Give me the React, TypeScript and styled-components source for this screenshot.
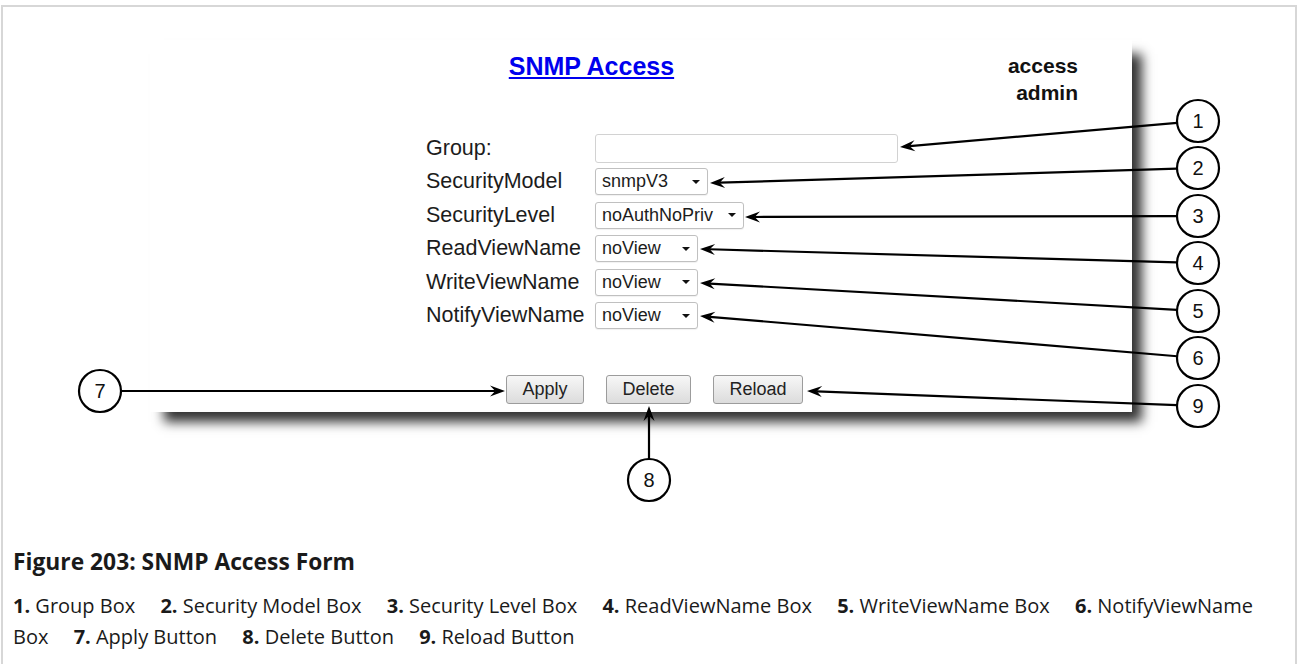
import styled, { createGlobalStyle } from "styled-components";

const GlobalStyle = createGlobalStyle`
  html, body {
    margin: 0;
    padding: 0;
    background: #ffffff;
  }
  body {
    font-family: "Liberation Sans", Arial, sans-serif;
    overflow: hidden;
  }
`;

const Frame = styled.div`
  margin: 5px 2px 0 1px;
  border: 2px solid #d7d7d7;
  border-bottom: none;
  min-height: 700px;
`;

const Figure = styled.div`
  position: relative;
  display: flow-root;
  height: 541px;
`;

const Panel = styled.div`
  margin: 33px 0 0 147px;
  width: 982px;
  height: 372px;
  box-sizing: border-box;
  padding-top: 12px;
  background: #ffffff;
  box-shadow: 12px 12px 11px -2px rgba(0, 0, 0, 0.8);
  display: flex;
  flex-direction: column;
`;

const Header = styled.div`
  display: grid;
  grid-template-columns: 1fr auto;
  padding: 0 54px 0 25px;
`;

const Title = styled.a`
  justify-self: center;
  font-size: 25px;
  line-height: 28px;
  font-weight: bold;
  color: #0000ee;
  text-decoration: underline;
  text-underline-offset: 2px;
`;

const User = styled.div`
  font-size: 21px;
  line-height: 27px;
  font-weight: bold;
  color: #111;
  text-align: right;
`;

const Form = styled.div`
  margin: 25.5px 0 0 276px;
  display: grid;
  grid-template-columns: 169px auto;
  grid-auto-rows: 33.5px;
  align-items: center;
`;

const Label = styled.div`
  font-size: 21.5px;
  color: #1c1c1c;
  white-space: nowrap;
`;

const TextInput = styled.div`
  width: 303px;
  height: 29px;
  box-sizing: border-box;
  border: 1px solid #d2d2d2;
  border-radius: 3px;
  background: #fff;
`;

const Select = styled.div<{ $w: number }>`
  width: ${(p) => p.$w}px;
  height: 27px;
  box-sizing: border-box;
  border: 1px solid #c0c0c0;
  border-radius: 3px;
  background: #fff;
  display: flex;
  align-items: center;
  padding-left: 6px;
  font-size: 18px;
  color: #1c1c1c;
  white-space: nowrap;
  box-shadow: 0 1px 1px rgba(0, 0, 0, 0.06);
`;

const Caret = styled.span`
  margin-left: auto;
  margin-right: 7px;
  width: 0;
  height: 0;
  border-left: 4px solid transparent;
  border-right: 4px solid transparent;
  border-top: 4px solid #111;
`;

const Buttons = styled.div`
  margin-top: 42.5px;
  padding-left: 356px;
  display: flex;
  gap: 22px;
`;

const Button = styled.button`
  height: 29px;
  box-sizing: border-box;
  padding: 0 15.5px;
  border: 1px solid #9c9c9c;
  border-radius: 3px;
  background: linear-gradient(#f7f7f7, #dcdcdc);
  font-family: "Liberation Sans", Arial, sans-serif;
  font-size: 18px;
  color: #222;
`;

const Callouts = styled.svg`
  position: absolute;
  left: 0;
  top: 0;
  pointer-events: none;
`;

const Caption = styled.div`
  padding: 0 8px 0 10px;
  font-family: "Open Sans", "Noto Sans", sans-serif;
  color: #1a1a1a;
`;

const CaptionTitle = styled.div`
  font-size: 22.8px;
  line-height: 28px;
  font-weight: 700;
`;

const CaptionList = styled.div`
  margin-top: 13.5px;
  font-size: 20px;
  line-height: 31px;
`;

const Item = styled.span`
  margin-right: 20px;
  b {
    font-weight: 700;
  }
`;

type Call = { n: string; cx: number; cy: number; tx: number; ty: number };

const calls: Call[] = [
  { n: "1", cx: 1198, cy: 121, tx: 900, ty: 147 },
  { n: "2", cx: 1198, cy: 168, tx: 710, ty: 183 },
  { n: "3", cx: 1198, cy: 216, tx: 745, ty: 217 },
  { n: "4", cx: 1198, cy: 263, tx: 700, ty: 249 },
  { n: "5", cx: 1198, cy: 311, tx: 700, ty: 283 },
  { n: "6", cx: 1198, cy: 358, tx: 700, ty: 316 },
  { n: "7", cx: 100, cy: 391, tx: 505, ty: 391 },
  { n: "8", cx: 649, cy: 480, tx: 649, ty: 406 },
  { n: "9", cx: 1198, cy: 406, tx: 807, ty: 391 },
];

const R = 21;

function Callout({ c }: { c: Call }) {
  const dx = c.tx - c.cx;
  const dy = c.ty - c.cy;
  const len = Math.hypot(dx, dy);
  const ux = dx / len;
  const uy = dy / len;
  const nx = -uy;
  const ny = ux;
  const sx = c.cx + ux * R;
  const sy = c.cy + uy * R;
  const L = 15;
  const W = 5.5;
  const bx = c.tx - ux * L;
  const by = c.ty - uy * L;
  const mx = c.tx - ux * L * 0.65;
  const my = c.ty - uy * L * 0.65;
  const head = `M${c.tx},${c.ty} L${bx + nx * W},${by + ny * W} L${mx},${my} L${bx - nx * W},${by - ny * W} Z`;
  return (
    <g>
      <line x1={sx} y1={sy} x2={mx} y2={my} stroke="#000" strokeWidth={2.2} />
      <path d={head} fill="#000" />
      <circle cx={c.cx} cy={c.cy} r={R} fill="#fff" stroke="#000" strokeWidth={2.2} />
      <text
        x={c.cx}
        y={c.cy + 7}
        textAnchor="middle"
        fontSize={20}
        fontFamily="Liberation Sans, Arial, sans-serif"
        fill="#111"
      >
        {c.n}
      </text>
    </g>
  );
}

export default function App() {
  return (
    <>
      <GlobalStyle />
      <Frame>
        <Figure>
          <Panel>
            <Header>
              <Title href="#">SNMP Access</Title>
              <User>
                access
                <br />
                admin
              </User>
            </Header>
            <Form>
              <Label>Group:</Label>
              <TextInput />
              <Label>SecurityModel</Label>
              <Select $w={113}>
                snmpV3
                <Caret />
              </Select>
              <Label>SecurityLevel</Label>
              <Select $w={149}>
                noAuthNoPriv
                <Caret />
              </Select>
              <Label>ReadViewName</Label>
              <Select $w={103}>
                noView
                <Caret />
              </Select>
              <Label>WriteViewName</Label>
              <Select $w={103}>
                noView
                <Caret />
              </Select>
              <Label>NotifyViewName</Label>
              <Select $w={103}>
                noView
                <Caret />
              </Select>
            </Form>
            <Buttons>
              <Button>Apply</Button>
              <Button>Delete</Button>
              <Button>Reload</Button>
            </Buttons>
          </Panel>
          <Callouts width={1292} height={541} viewBox="3 7 1292 541">
            {calls.map((c) => (
              <Callout key={c.n} c={c} />
            ))}
          </Callouts>
        </Figure>
        <Caption>
          <CaptionTitle>Figure 203: SNMP Access Form</CaptionTitle>
          <CaptionList>
            <Item><b>1.</b> Group Box</Item>{" "}
            <Item><b>2.</b> Security Model Box</Item>{" "}
            <Item><b>3.</b> Security Level Box</Item>{" "}
            <Item><b>4.</b> ReadViewName Box</Item>{" "}
            <Item><b>5.</b> WriteViewName Box</Item>{" "}
            <Item><b>6.</b> NotifyViewName Box</Item>{" "}
            <Item><b>7.</b> Apply Button</Item>{" "}
            <Item><b>8.</b> Delete Button</Item>{" "}
            <Item><b>9.</b> Reload Button</Item>
          </CaptionList>
        </Caption>
      </Frame>
    </>
  );
}
